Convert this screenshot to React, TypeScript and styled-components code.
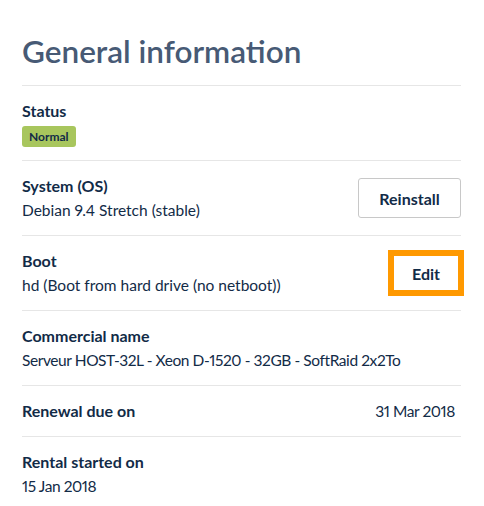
import React from "react";
import styled, { createGlobalStyle } from "styled-components";

const GlobalStyle = createGlobalStyle`
  html, body { margin: 0; padding: 0; background: #ffffff; }
  body {
    font-family: Lato, "Noto Sans", sans-serif;
    color: #122b47;
    font-variant-numeric: proportional-nums;
  }
`;

const Page = styled.div`
  padding: 29px 23px 0 22px;
`;

const Title = styled.h2`
  margin: 0;
  font-size: 31.5px;
  line-height: 44px;
  font-weight: 600;
  color: #475a75;
  padding-bottom: 12px;
  border-bottom: 1px solid #e6e6e6;
`;

const List = styled.div`
  display: flex;
  flex-direction: column;
`;

const Row = styled.div`
  display: flex;
  align-items: center;
  justify-content: space-between;
  padding: 13px 0;
  border-bottom: 1px solid #e6e6e6;
  &:last-child { border-bottom: none; }
`;

const Info = styled.div`
  display: flex;
  flex-direction: column;
`;

const Label = styled.div`
  font-size: 16px;
  line-height: 24px;
  font-weight: 700;
  color: #122b47;
`;

const Value = styled.div<{ $right?: boolean; $tight?: boolean }>`
  font-size: 15.5px;
  line-height: 24px;
  color: #122b47;
  letter-spacing: ${(p) => (p.$tight ? "-0.42px" : "0")};
  padding-right: ${(p) => (p.$right ? "6px" : "0")};
`;

const Badge = styled.span`
  align-self: flex-start;
  margin-top: 3px;
  height: 21px;
  line-height: 21px;
  padding: 0 7px;
  border-radius: 3px;
  background: #a8c65d;
  color: #122b47;
  font-size: 12px;
  font-weight: 700;
`;

const Button = styled.button<{ $focused?: boolean; $w: number }>`
  box-sizing: border-box;
  width: ${(p) => p.$w}px;
  height: 40px;
  padding: 0;
  background: #fff;
  border: ${(p) => (p.$focused ? "3px solid #ff9900" : "1px solid #c8c8c8")};
  box-shadow: ${(p) => (p.$focused ? "0 0 0 3px #ff9900" : "none")};
  border-radius: ${(p) => (p.$focused ? "0" : "3px")};
  font-family: Lato, "Noto Sans", sans-serif;
  font-size: 16px;
  font-weight: 700;
  color: #122b47;
  cursor: pointer;
`;

export default function App() {
  return (
    <>
      <GlobalStyle />
      <Page>
        <Title>General information</Title>
        <List>
          <Row>
            <Info>
              <Label>Status</Label>
              <Badge>Normal</Badge>
            </Info>
          </Row>
          <Row>
            <Info>
              <Label>System (OS)</Label>
              <Value>Debian 9.4 Stretch (stable)</Value>
            </Info>
            <Button $w={103}>Reinstall</Button>
          </Row>
          <Row>
            <Info>
              <Label>Boot</Label>
              <Value>hd (Boot from hard drive (no netboot))</Value>
            </Info>
            <Button $focused $w={70}>Edit</Button>
          </Row>
          <Row>
            <Info>
              <Label>Commercial name</Label>
              <Value $tight>Serveur HOST-32L - Xeon D-1520 - 32GB - SoftRaid 2x2To</Value>
            </Info>
          </Row>
          <Row>
            <Label>Renewal due on</Label>
            <Value $right $tight>31 Mar 2018</Value>
          </Row>
          <Row>
            <Info>
              <Label>Rental started on</Label>
              <Value $tight>15 Jan 2018</Value>
            </Info>
          </Row>
        </List>
      </Page>
    </>
  );
}
